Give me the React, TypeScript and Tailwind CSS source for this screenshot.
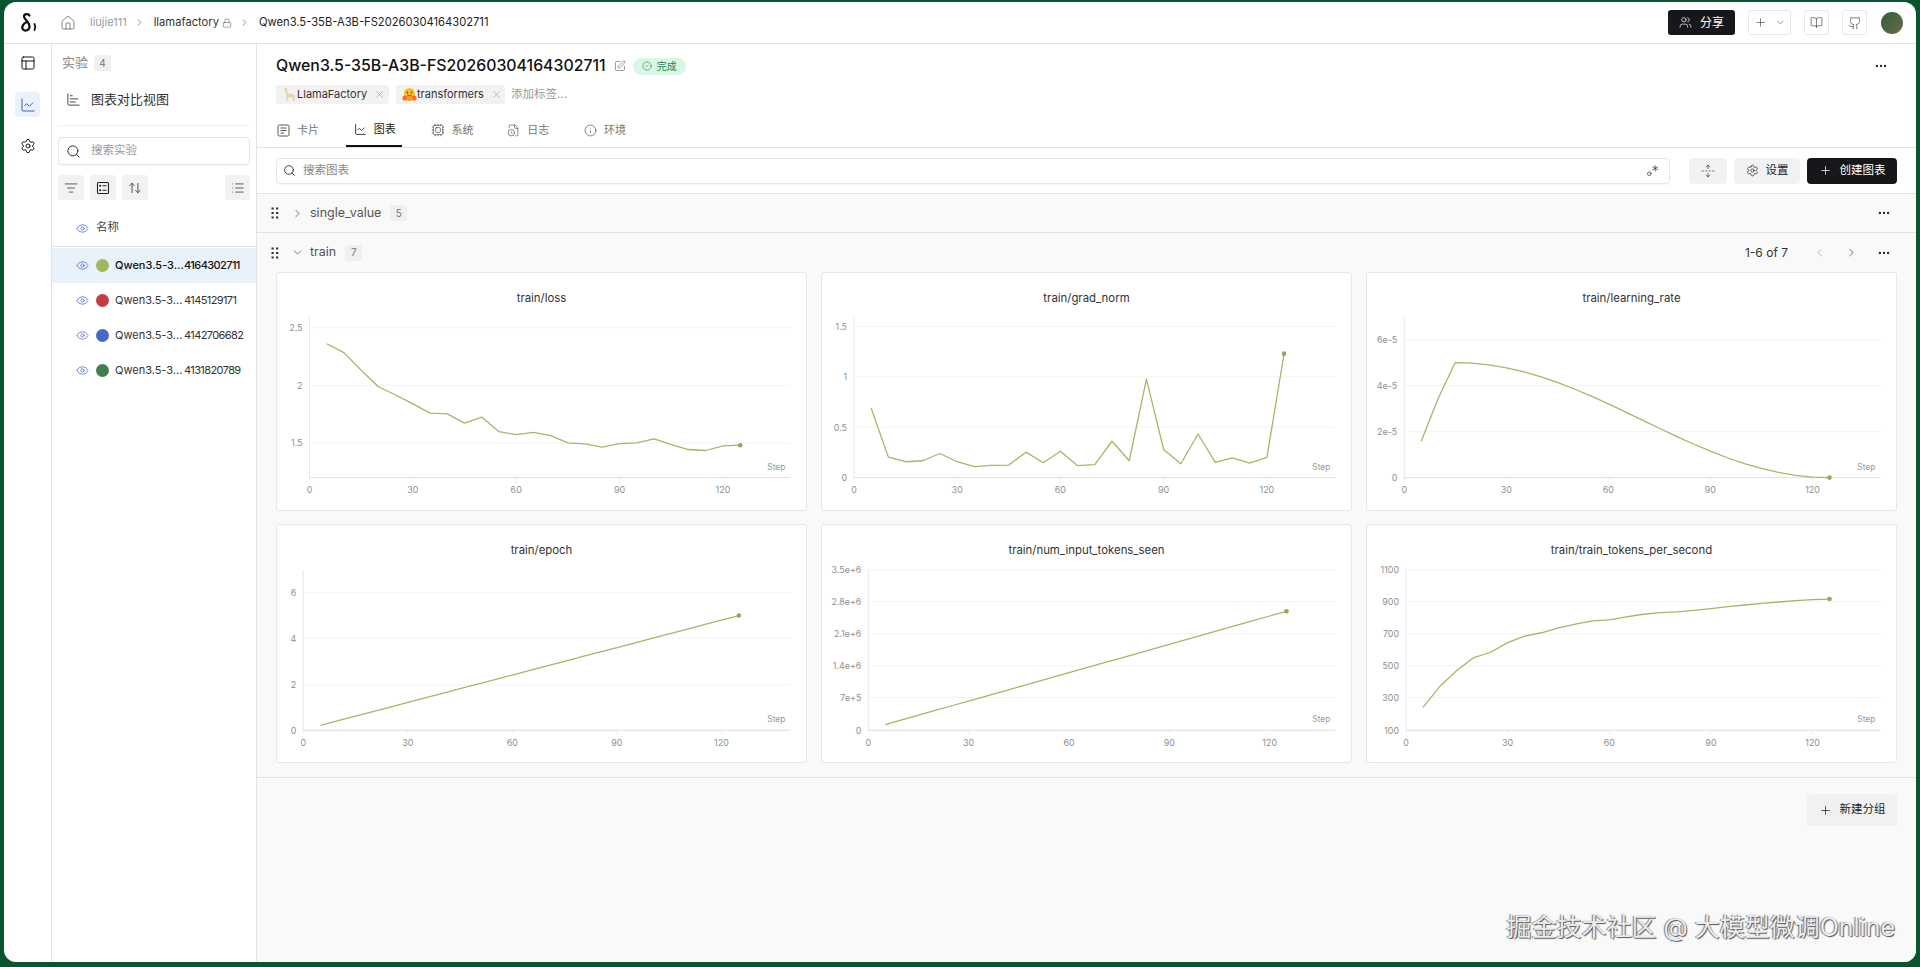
import React from 'react';
import {
  Home, ChevronRight, ChevronLeft, ChevronDown, Lock, Users, Plus, BookOpen, Github, SquarePen, CircleCheck, X,
  ChartLine, Settings, Search, ListFilter, ArrowUpDown, List, Cpu, FileClock, Info, Ellipsis, Regex, UnfoldVertical,
  Eye, ChartBar, PanelsTopLeft,
} from 'lucide-react';

const FONT = "font-['Inter','Noto_Sans_CJK_SC',sans-serif]";

type ChartCfg = {
  title: string;
  ax: number;
  k: number;
  off: number;
  top: number;
  grid: [number, string][];
  ys: number[];
};

const lerp = (a: number, b: number) => Array.from({ length: 25 }, (_, i) => a + ((b - a) * i) / 24);
const lr = [635, 505].concat(
  Array.from({ length: 23 }, (_, i) => 745 - 348 * 0.5 * (1 + Math.cos((Math.PI * i) / 22))),
);

const charts: ChartCfg[] = [
  {
    title: 'train/loss', ax: 31, k: 3.475, off: -82, top: 44,
    grid: [[412, '2.5'], [586, '2'], [760, '1.5'], [865, '']],
    ys: [460, 487, 540, 590, 615, 642, 670, 672, 700, 682, 726, 735, 728, 738, 760, 763, 773, 762, 760, 748, 765, 780, 783, 769, 767],
  },
  {
    title: 'train/grad_norm', ax: 30.5, k: 3.47, off: -12, top: 44,
    grid: [[198, '1.5'], [350, '1'], [502, '0.5'], [655, '0']],
    ys: [445, 593, 607, 604, 582, 607, 622, 618, 617, 578, 610, 575, 619, 616, 545, 604, 357, 570, 613, 523, 609, 595, 611, 594, 280],
  },
  {
    title: 'train/learning_rate', ax: 35.8, k: 3.431, off: -42, top: 44,
    grid: [[328, '6e-5'], [466, '4e-5'], [606, '2e-5'], [745, '0']],
    ys: lr,
  },
  {
    title: 'train/epoch', ax: 24.7, k: 3.515, off: -14, top: 45,
    grid: [[247, '6'], [384, '4'], [526, '2'], [663, '0']],
    ys: lerp(648, 316),
  },
  {
    title: 'train/num_input_tokens_seen', ax: 45, k: 3.373, off: -14, top: 45,
    grid: [[178, '3.5e+6'], [274, '2.8e+6'], [371, '2.1e+6'], [468, '1.4e+6'], [564, '7e+5'], [663, '0']],
    ys: lerp(646, 303),
  },
  {
    title: 'train/train_tokens_per_second', ax: 37.6, k: 3.417, off: -14, top: 45,
    grid: [[178, '1100'], [274, '900'], [371, '700'], [468, '500'], [564, '300'], [663, '100']],
    ys: [594, 530, 482, 443, 427, 398, 378, 368, 353, 342, 332, 329, 320, 312, 307, 305, 300, 295, 289, 284, 279, 275, 271, 268, 266],
  },
];

function Chart({ c }: { c: ChartCfg }) {
  const Y = (z: number) => z / 3 + c.off;
  const bottom = Y(c.grid[c.grid.length - 1][0]);
  const pts = c.ys.map((z, i) => [c.ax + (i + 1) * 5 * c.k, Y(z)]);
  const last = pts[pts.length - 1];
  return (
    <div className="h-[239px] rounded-[3px] border border-[#e6e6e6] bg-white overflow-hidden">
      <svg viewBox="0 0 530 239" className="block w-full h-full" fontFamily="Inter, sans-serif">
        <text x="265" y="25" textAnchor="middle" dominantBaseline="central" fontSize="11.5" fill="#333">{c.title}</text>
        {c.grid.map(([z, label], i) => (
          <g key={i}>
            <line x1={c.ax} x2="516" y1={Y(z)} y2={Y(z)} stroke="#f3f3f3" />
            <text x={c.ax - 7} y={Y(z)} textAnchor="end" dominantBaseline="central" fontSize="9" fill="#8f8f8f">{label}</text>
          </g>
        ))}
        <line x1={c.ax} x2={c.ax} y1={c.top} y2={bottom} stroke="#e4e6ea" />
        <line x1={c.ax} x2="516" y1={bottom} y2={bottom} stroke="#dfe2e6" />
        {[0, 30, 60, 90, 120].map((s) => (
          <g key={s}>
            <line x1={c.ax + s * c.k} x2={c.ax + s * c.k} y1={bottom} y2={bottom + 3} stroke="#e9ebee" />
            <text x={c.ax + s * c.k} y={bottom + 12} textAnchor="middle" dominantBaseline="central" fontSize="9" fill="#8f8f8f">{s}</text>
          </g>
        ))}
        <text x="511" y={bottom - 11} textAnchor="end" dominantBaseline="central" fontSize="8.5" fill="#999">Step</text>
        <polyline points={pts.map((p) => p.join(',')).join(' ')} fill="none" stroke="#a3b866" strokeWidth="1.3" strokeLinejoin="round" />
        <circle cx={last[0]} cy={last[1]} r="2.3" fill="#8fab55" />
      </svg>
    </div>
  );
}

function Logo() {
  return (
    <svg width="18" height="22" viewBox="0 0 18 22" fill="none" stroke="#111" strokeLinecap="round">
      <path d="M9.5 3.5 C8.5 1.5 4 1.5 4 4.5 C4 7.5 9.5 9.5 9.5 14.5 C9.5 18.5 5 19.5 3 17.5 C1 15 3.5 11.5 6.5 10" strokeWidth="2.2" />
      <path d="M14.5 12 C15.5 14 15.5 16 14.5 18" strokeWidth="1.8" />
    </svg>
  );
}

function CardIcon() {
  return (
    <svg width="13" height="13" viewBox="0 0 13 13" fill="none" stroke="#555" strokeWidth="1">
      <rect x="1" y="1" width="11" height="11" rx="1.5" />
      <path d="M3.5 4h6M3.5 6.5h6M3.5 9h3.5" />
    </svg>
  );
}

function ListBoxIcon() {
  return (
    <svg width="14" height="14" viewBox="0 0 14 14" fill="none" stroke="#222" strokeWidth="1.1">
      <rect x="1.5" y="1.5" width="11" height="11" rx="1" />
      <path d="M6.5 4.8h4M6.5 9.2h4" />
      <circle cx="4.2" cy="4.8" r=".5" fill="#222" />
      <circle cx="4.2" cy="9.2" r=".5" fill="#222" />
    </svg>
  );
}

function Grip() {
  return (
    <svg width="8" height="12" viewBox="0 0 8 12" fill="#333">
      {[1.5, 6, 10.5].map((y) => (
        <g key={y}>
          <rect x="0.5" y={y - 1} width="2.2" height="2" />
          <rect x="5" y={y - 1} width="2.2" height="2" />
        </g>
      ))}
    </svg>
  );
}

function Llama() {
  return (
    <svg width="14" height="15" viewBox="0 0 13 15" fill="#e8d3ae" className="shrink-0">
      <path d="M1 1 L3.5 1 L4 6 L10 7 L11.5 9 L11 14 L9.6 14 L9.2 10.5 L5 10.5 L4.6 14 L3.2 14 L2.6 7 L1.5 4 Z" />
    </svg>
  );
}

function Hug() {
  return (
    <svg width="15" height="15" viewBox="0 0 15 15" className="shrink-0">
      <circle cx="7.5" cy="6.5" r="5.5" fill="#fbbf24" />
      <ellipse cx="3" cy="11" rx="2.6" ry="2.6" fill="#f97316" />
      <ellipse cx="12" cy="11" rx="2.6" ry="2.6" fill="#f97316" />
      <ellipse cx="7.5" cy="11.5" rx="3" ry="2.4" fill="#fb923c" />
      <circle cx="5.4" cy="5.4" r=".8" fill="#7c2d12" />
      <circle cx="9.6" cy="5.4" r=".8" fill="#7c2d12" />
      <path d="M5.2 7.8 Q7.5 9.6 9.8 7.8" stroke="#7c2d12" strokeWidth=".8" fill="none" />
    </svg>
  );
}

const runs = [
  { color: 'bg-[#9fb858]', num: '4164302711', active: true },
  { color: 'bg-[#c23f3f]', num: '4145129171', active: false },
  { color: 'bg-[#4768c9]', num: '4142706682', active: false },
  { color: 'bg-[#3f7f4f]', num: '4131820789', active: false },
];

const tabs = [
  { label: '卡片', icon: <CardIcon /> },
  { label: '图表', icon: <ChartLine size={13} strokeWidth={1.5} className="text-[#111]" />, active: true },
  { label: '系统', icon: <Cpu size={14} strokeWidth={1.3} className="text-[#555]" /> },
  { label: '日志', icon: <FileClock size={13} strokeWidth={1.3} className="text-[#555]" /> },
  { label: '环境', icon: <Info size={13} strokeWidth={1.3} className="text-[#555]" /> },
];

function Badge({ children }: { children: React.ReactNode }) {
  return <span className="flex h-[16px] w-[17px] items-center justify-center rounded-[2px] bg-[#f0f0f0] text-[10px] text-[#777]">{children}</span>;
}

export default function App() {
  return (
    <div className={`h-[967px] overflow-hidden bg-[#0a5530] pl-[4px] pr-[4px] pt-[2px] pb-[5px] ${FONT}`}>
      <div className="relative flex h-full flex-col overflow-hidden rounded-[12px] bg-white">
        {/* header */}
        <header className="flex h-[42px] shrink-0 items-center border-b border-[#e3e3e3] pl-[16px] pr-[13px]">
          <Logo />
          <Home size={16} strokeWidth={1.2} className="ml-[22px] text-[#666]" />
          <span className="ml-[14px] text-[11px] text-[#999]">liujie111</span>
          <ChevronRight size={11} className="ml-[7px] text-[#888]" />
          <span className="ml-[9px] text-[11.2px] text-[#333]">llamafactory</span>
          <Lock size={10} strokeWidth={1.3} className="ml-[3px] text-[#555]" />
          <ChevronRight size={11} className="ml-[7px] text-[#888]" />
          <span className="ml-[9px] text-[11.2px] text-[#222]">Qwen3.5-35B-A3B-FS20260304164302711</span>
          <div className="ml-auto flex items-center">
            <button className="flex h-[25px] w-[67px] items-center justify-center gap-[8px] rounded-[3px] bg-[#16171a] text-[12px] text-white">
              <Users size={13} strokeWidth={1.3} />
              分享
            </button>
            <button className="ml-[13px] flex h-[25px] w-[43px] items-center justify-center gap-[8px] rounded-[3px] border border-[#e6e6e6] text-[#444]">
              <Plus size={13} strokeWidth={1.2} />
              <ChevronDown size={11} strokeWidth={1.2} />
            </button>
            <button className="ml-[13px] flex h-[25px] w-[25px] items-center justify-center rounded-[3px] border border-[#e6e6e6] text-[#444]">
              <BookOpen size={13} strokeWidth={1.2} />
            </button>
            <button className="ml-[13px] flex h-[25px] w-[25px] items-center justify-center rounded-[3px] border border-[#e6e6e6] text-[#444]">
              <Github size={14} strokeWidth={1.2} />
            </button>
            <div className="ml-[14px] h-[22px] w-[22px] rounded-full bg-gradient-to-br from-[#24603a] to-[#6b6a45]" />
          </div>
        </header>

        <div className="flex min-h-0 flex-1">
          {/* rail */}
          <nav className="flex w-[48px] shrink-0 flex-col items-center border-r border-[#e3e3e3] pt-[7px]">
            <div className="flex h-[24px] items-center">
              <PanelsTopLeft size={16} strokeWidth={1.5} className="text-[#111]" />
            </div>
            <div className="mt-[17px] flex h-[25px] w-[25px] items-center justify-center rounded-[4px] bg-[#eaf1fb]">
              <ChartLine size={16} strokeWidth={1.5} className="text-[#3b5fc4]" />
            </div>
            <div className="mt-[17px] flex h-[24px] items-center">
              <Settings size={16} strokeWidth={1.5} className="text-[#111]" />
            </div>
          </nav>

          {/* sidebar */}
          <aside className="flex w-[205px] shrink-0 flex-col border-r border-[#e3e3e3]">
            <div className="mt-[7px] flex h-[24px] items-center gap-[6px] pl-[10px] text-[13px] text-[#888]">
              实验
              <Badge>4</Badge>
            </div>
            <div className="mx-[6px] flex h-[51px] items-center gap-[10px] border-b border-[#efefef] pb-[1px] pl-[8px] text-[13px] text-[#333]">
              <ChartBar size={15} strokeWidth={1.3} className="text-[#222]" />
              图表对比视图
            </div>
            <div className="mx-[6px] mt-[11px] flex h-[28px] items-center gap-[10px] rounded-[4px] border border-[#e5e5e5] pl-[7px] text-[11.5px] text-[#999] shadow-[0_1px_1px_rgba(0,0,0,0.04)]">
              <Search size={15} strokeWidth={1.5} className="text-[#222]" />
              搜索实验
            </div>
            <div className="mx-[6px] mt-[10px] flex h-[25px] gap-[6px]">
              <div className="flex w-[26px] items-center justify-center rounded-[3px] bg-[#f2f2f2]"><ListFilter size={14} strokeWidth={1.2} className="text-[#222]" /></div>
              <div className="flex w-[26px] items-center justify-center rounded-[3px] bg-[#f2f2f2]"><ListBoxIcon /></div>
              <div className="flex w-[26px] items-center justify-center rounded-[3px] bg-[#f2f2f2]"><ArrowUpDown size={14} strokeWidth={1.3} className="text-[#222]" /></div>
              <div className="ml-auto flex w-[25px] items-center justify-center rounded-[3px] bg-[#f2f2f2]"><List size={14} strokeWidth={1.2} className="text-[#222]" /></div>
            </div>
            <div className="mt-[10px] flex h-[37px] items-center border-b border-[#e3e3e3] pl-[24px] text-[11.5px] text-[#444]">
              <Eye size={13} strokeWidth={1.3} className="text-[#3f63c8]" />
              <span className="ml-[7px]">名称</span>
            </div>
            <div className="mt-[1px]">
              {runs.map((r) => (
                <div key={r.num} className={`flex h-[35px] items-center pl-[24px] text-[11px] ${r.active ? 'bg-[#e9f2fb] font-medium text-[#111]' : 'text-[#333]'}`}>
                  <Eye size={13} strokeWidth={1.3} className="shrink-0 text-[#3f63c8]" />
                  <span className={`ml-[7px] h-[13px] w-[13px] shrink-0 rounded-full ${r.color}`} />
                  <span className="ml-[6px] w-[69px] shrink-0 whitespace-nowrap">Qwen3.5-3...</span>
                  <span className="whitespace-nowrap tracking-[-0.6px]">{r.num}</span>
                </div>
              ))}
            </div>
          </aside>

          {/* main */}
          <main className="flex min-w-0 flex-1 flex-col bg-[#f9f9f9]">
            <div className="h-[104px] shrink-0 border-b border-[#e3e3e3] bg-white">
              <div className="mt-[11px] flex h-[22px] items-center pl-[19px] pr-[28px]">
                <h1 className="text-[15.85px] font-medium leading-none text-[#111]">Qwen3.5-35B-A3B-FS20260304164302711</h1>
                <SquarePen size={12} strokeWidth={1.3} className="ml-[8px] text-[#666]" />
                <span className="ml-[7px] flex h-[17px] w-[53px] items-center justify-center gap-[5px] rounded-full bg-[#d9f7e5] text-[10px] text-[#2f7d52]">
                  <CircleCheck size={10} strokeWidth={1.4} />
                  完成
                </span>
                <Ellipsis size={14} strokeWidth={2} className="ml-auto text-[#222]" />
              </div>
              <div className="mt-[8px] flex h-[19px] items-center gap-[7px] pl-[19px] text-[11px] text-[#333]">
                <span className="flex h-[19px] w-[113px] items-center rounded-[2px] bg-[#f2f2f2] pl-[7px]">
                  <Llama />
                  <span>LlamaFactory</span>
                  <X size={11} strokeWidth={1.1} className="ml-[7px] text-[#888]" />
                </span>
                <span className="flex h-[19px] w-[109px] items-center rounded-[2px] bg-[#f2f2f2] pl-[6px]">
                  <Hug />
                  <span>transformers</span>
                  <X size={11} strokeWidth={1.1} className="ml-[7px] text-[#888]" />
                </span>
                <span className="-ml-[1px] text-[11.5px] text-[#999]">添加标签...</span>
              </div>
              <div className="mt-[11px] flex h-[32px] items-end gap-[20.75px] pl-[12px]">
                {tabs.map((t) => (
                  <div key={t.label} className={`flex h-[32px] w-[56px] items-center gap-[7px] pb-[2px] pl-[8px] text-[11px] ${t.active ? 'border-b-2 border-[#111] text-[#222]' : 'text-[#777]'}`}>
                    {t.icon}
                    <span className="whitespace-nowrap">{t.label}</span>
                  </div>
                ))}
              </div>
            </div>

            <div className="flex h-[46px] shrink-0 items-center border-b border-[#e3e3e3] bg-white pl-[19px] pr-[19px]">
              <div className="flex h-[26px] flex-1 items-center gap-[7px] rounded-[4px] border border-[#e5e5e5] pl-[6px] pr-[10px] text-[11.5px] text-[#888] shadow-[0_1px_1px_rgba(0,0,0,0.04)]">
                <Search size={13} strokeWidth={1.5} className="text-[#222]" />
                搜索图表
                <Regex size={13} strokeWidth={1.4} className="ml-auto text-[#333]" />
              </div>
              <button className="ml-[19px] flex h-[26px] w-[38px] items-center justify-center rounded-[4px] bg-[#f2f2f2]">
                <UnfoldVertical size={14} strokeWidth={1.2} className="text-[#333]" />
              </button>
              <button className="ml-[7px] flex h-[26px] w-[66px] items-center justify-center gap-[7px] rounded-[4px] bg-[#f2f2f2] text-[11.5px] text-[#222]">
                <Settings size={13} strokeWidth={1.3} />
                设置
              </button>
              <button className="ml-[7px] flex h-[26px] w-[90px] items-center justify-center gap-[8px] rounded-[4px] bg-[#16171a] text-[11.5px] text-white">
                <Plus size={13} strokeWidth={1.4} />
                创建图表
              </button>
            </div>

            {/* single_value */}
            <div className="flex h-[39px] shrink-0 items-center border-b border-[#e3e3e3] pl-[14px] pr-[25px]">
              <Grip />
              <ChevronRight size={13} strokeWidth={1.3} className="ml-[12px] text-[#444]" />
              <span className="ml-[6px] text-[12.5px] text-[#555]">single_value</span>
              <span className="ml-[9px]"><Badge>5</Badge></span>
              <Ellipsis size={14} strokeWidth={2} className="ml-auto text-[#222]" />
            </div>

            {/* train */}
            <div className="shrink-0 border-b border-[#e3e3e3] pb-[14px]">
              <div className="flex h-[39px] items-center pl-[14px] pr-[25px]">
                <Grip />
                <ChevronDown size={13} strokeWidth={1.3} className="ml-[12px] text-[#444]" />
                <span className="ml-[6px] text-[12.5px] text-[#555]">train</span>
                <span className="ml-[9px]"><Badge>7</Badge></span>
                <span className="ml-auto text-[12px] text-[#333]">1-6 of 7</span>
                <ChevronLeft size={13} strokeWidth={1.3} className="ml-[25px] text-[#999]" />
                <ChevronRight size={13} strokeWidth={1.3} className="ml-[19px] text-[#333]" />
                <Ellipsis size={14} strokeWidth={2} className="ml-[19px] text-[#222]" />
              </div>
              <div className="grid grid-cols-3 gap-x-[14px] gap-y-[13px] px-[19px]">
                {charts.map((c) => (
                  <Chart key={c.title} c={c} />
                ))}
              </div>
            </div>

            <div className="flex shrink-0 justify-end pr-[19px] pt-[16px]">
              <button className="flex h-[32px] w-[90px] items-center justify-center gap-[8px] rounded-[3px] bg-[#f1f1f1] text-[11.5px] text-[#222]">
                <Plus size={13} strokeWidth={1.4} />
                新建分组
              </button>
            </div>
          </main>
        </div>

        {/* watermark overlay */}
        <div className="absolute bottom-[22px] right-[21px] whitespace-nowrap text-[25px] leading-none text-[#ececec] [text-shadow:1px_1px_1px_#555,-1px_0_1px_#777]">
          掘金技术社区 @ 大模型微调Online
        </div>
      </div>
    </div>
  );
}
